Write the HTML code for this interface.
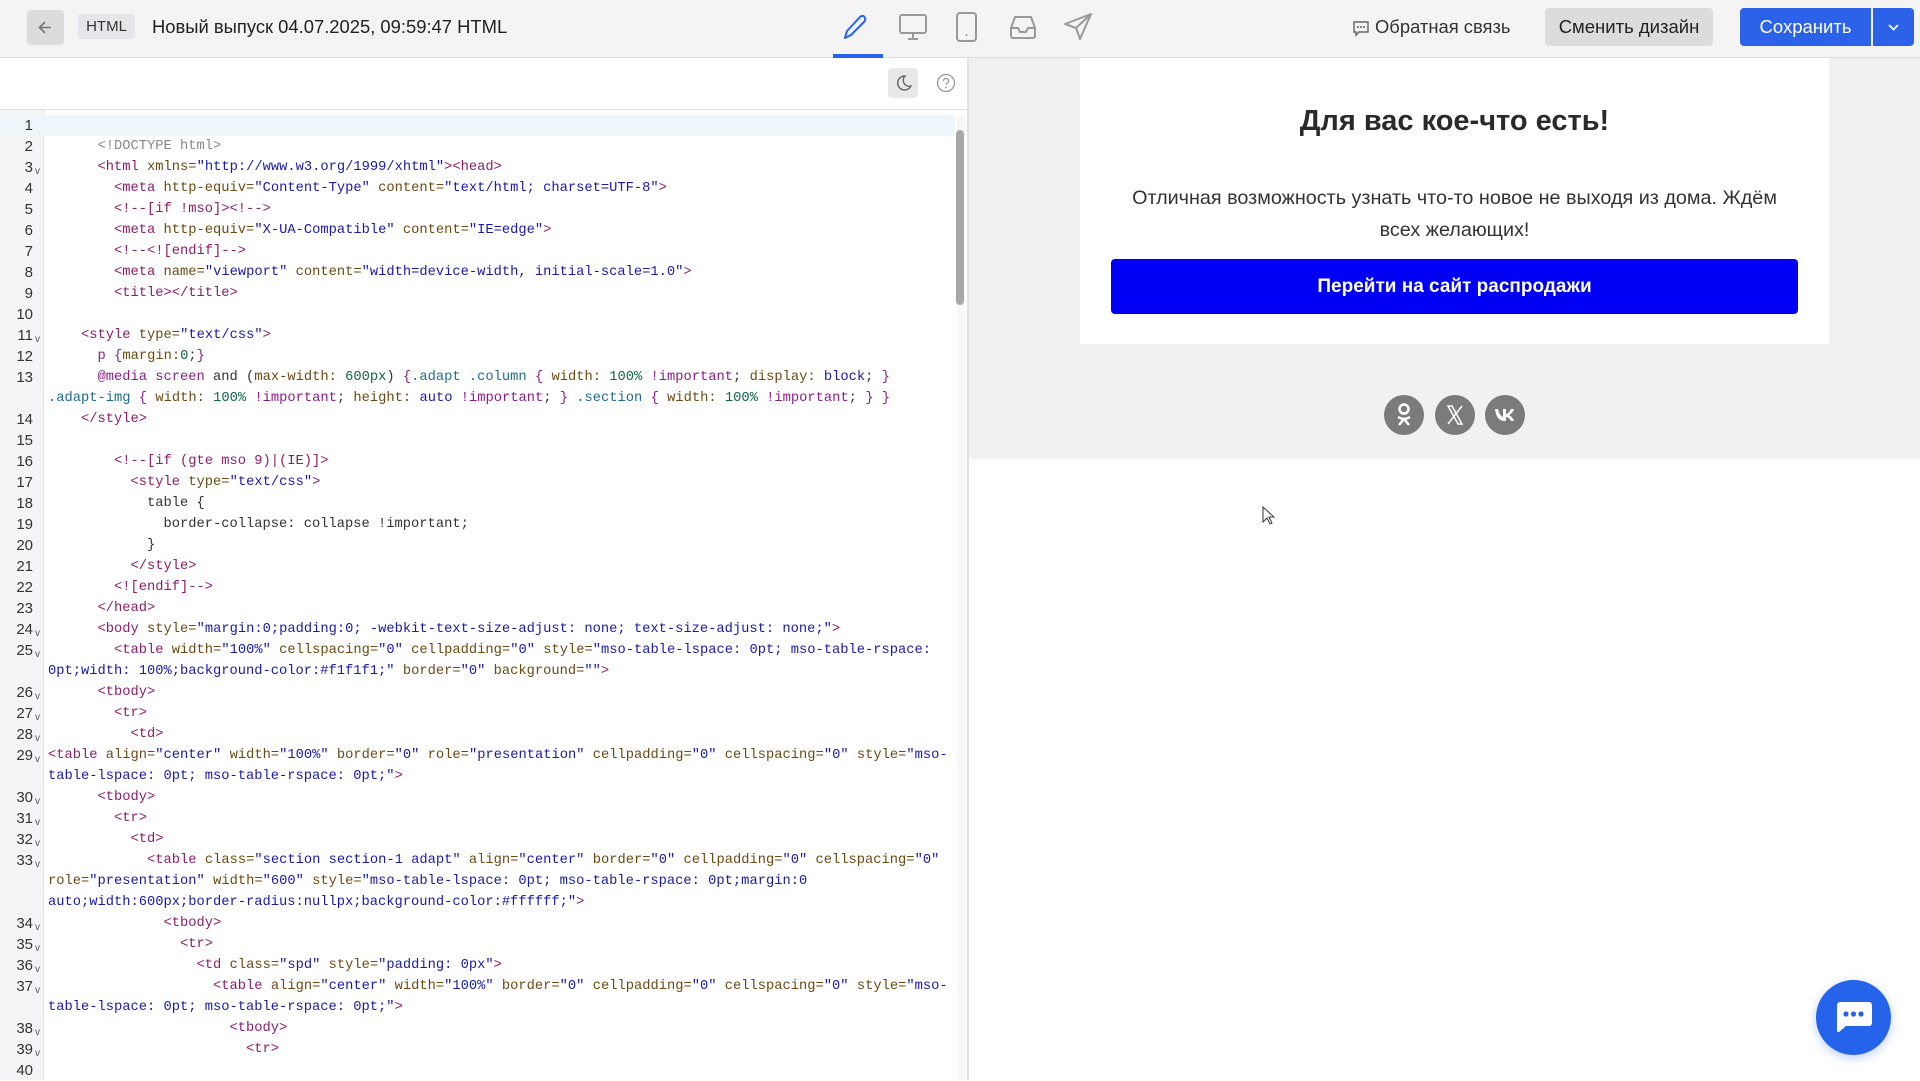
<!DOCTYPE html>
<html><head><meta charset="utf-8">
<style>
*{box-sizing:border-box;margin:0;padding:0}
body{width:1920px;height:1080px;overflow:hidden;background:#fff;font-family:"Liberation Sans",sans-serif;position:relative}
.hdr{position:absolute;left:0;top:0;width:1920px;height:58px;background:#f4f4f5;border-bottom:1px solid #dcdce2}
.abs{position:absolute}
.back{left:27px;top:10px;width:37px;height:35px;background:#dcdcdc;border-radius:4px}
.badge{left:78px;top:14px;width:57px;height:25px;background:#e6e6ea;border-radius:3px;font-size:15px;color:#333;text-align:center;line-height:25px}
.title{left:152px;top:16px;font-size:18.4px;color:#222}
.btn{border-radius:4px;font-size:18.5px;line-height:38px;text-align:center}
.tb{position:absolute;left:0;top:58px;width:967px;height:52px;background:#fff;border-bottom:1px solid #dcdce2}
.gut{position:absolute;left:0;top:110px;width:44px;height:970px;background:#f5f5f7;border-right:1px solid #e2e2e6}
.code{position:absolute;left:0;top:115px;width:955px;font-family:"Liberation Mono",monospace;font-size:13.75px;color:#333}
.r{height:21px;line-height:21px;white-space:pre;position:relative}
.n{position:absolute;left:0;width:33px;text-align:right;font-family:"Liberation Sans",sans-serif;font-size:15px;color:#333}
.f{position:absolute;left:35px;top:4px;font-size:10px;color:#555;font-family:"Liberation Sans",sans-serif}
.x{position:absolute;left:48px}
.t{color:#8b1e6b}.a{color:#6b4a12}.v{color:#1a1aa6}.g{color:#888}.s{color:#1f6a8f}.k{color:#116644}.p{color:#8b1e8b}
.right{position:absolute;left:969px;top:58px;width:951px;height:401px;background:#f1f1f1}
.card{position:absolute;left:1080px;top:58px;width:749px;height:286px;background:#fff}
</style></head><body>
<div class="hdr">
 <div class="abs back"><svg width="37" height="35" viewBox="0 0 37 35"><path d="M24 17.5H13M18 12l-5.5 5.5L18 23" stroke="#777" stroke-width="1.6" fill="none"/></svg></div>
 <div class="abs badge">HTML</div>
 <div class="abs title">Новый выпуск 04.07.2025, 09:59:47 HTML</div>
 <svg class="abs" style="left:840px;top:12px" width="30" height="30" viewBox="0 0 30 30"><path d="M5 26l2-7L20 5c1.5-1.5 3.5-1.5 4.5 0s1 3 0 4.5L11 23z" stroke="#2563eb" stroke-width="2" fill="none" stroke-linejoin="round"/></svg>
 <div class="abs" style="left:833px;top:54px;width:50px;height:4px;background:#2563eb"></div>
 <svg class="abs" style="left:898px;top:12px" width="30" height="30" viewBox="0 0 30 30"><rect x="2" y="3" width="26" height="18" rx="2" stroke="#999" stroke-width="2" fill="none"/><path d="M15 21v5M10 27h10" stroke="#999" stroke-width="2"/></svg>
 <svg class="abs" style="left:955px;top:12px" width="24" height="30" viewBox="0 0 24 30"><rect x="2" y="1" width="19" height="28" rx="3" stroke="#999" stroke-width="2" fill="none"/><circle cx="11.5" cy="23" r="1" fill="#999"/></svg>
 <svg class="abs" style="left:1008px;top:12px" width="30" height="30" viewBox="0 0 30 30"><path d="M3 16l4-11h16l4 11v8a2 2 0 0 1-2 2H5a2 2 0 0 1-2-2zM3 16h7l2 4h6l2-4h7" stroke="#999" stroke-width="2" fill="none" stroke-linejoin="round"/></svg>
 <svg class="abs" style="left:1063px;top:12px" width="30" height="30" viewBox="0 0 30 30"><path d="M28 2L2 12l11 4 4 11zM28 2L13 16" stroke="#999" stroke-width="2" fill="none" stroke-linejoin="round"/></svg>
 <svg class="abs" style="left:1352px;top:19px" width="18" height="18" viewBox="0 0 18 18"><path d="M2 3h14v10H7l-3 3v-3H2z" stroke="#666" stroke-width="1.4" fill="none"/><circle cx="6" cy="8" r="1" fill="#666"/><circle cx="9" cy="8" r="1" fill="#666"/><circle cx="12" cy="8" r="1" fill="#666"/></svg>
 <div class="abs" style="left:1375px;top:16px;font-size:18.4px;color:#333">Обратная связь</div>
 <div class="abs btn" style="left:1545px;top:8px;width:168px;background:#dcdcdc;color:#222">Сменить дизайн</div>
 <div class="abs btn" style="left:1740px;top:8px;width:131px;background:#2b62e8;color:#fff;border-radius:4px 0 0 4px">Сохранить</div>
 <div class="abs btn" style="left:1873px;top:8px;width:41px;height:38px;background:#2b62e8;border-radius:0 4px 4px 0"><svg width="41" height="38" viewBox="0 0 41 38"><path d="M16 17l4.5 4.5L25 17" stroke="#fff" stroke-width="1.8" fill="none"/></svg></div>
</div>
<div class="tb">
 <div class="abs" style="left:888px;top:10px;width:30px;height:30px;background:#e8e8e8;border-radius:4px"><svg width="30" height="30" viewBox="0 0 30 30"><path d="M17 8a7 7 0 1 0 6 10a6 6 0 0 1-6-10z" stroke="#666" stroke-width="1.4" fill="none"/></svg></div>
 <svg class="abs" style="left:936px;top:15px" width="20" height="20" viewBox="0 0 20 20"><circle cx="10" cy="10" r="8.5" stroke="#999" stroke-width="1.3" fill="none"/><path d="M7.5 8a2.5 2.5 0 1 1 3.5 2.2c-.7.4-1 .8-1 1.6" stroke="#999" stroke-width="1.3" fill="none"/><circle cx="10" cy="14.5" r=".9" fill="#999"/></svg>
</div>
<div class="abs" style="left:967px;top:58px;width:2px;height:1022px;background:#e2e2e6"></div>
<div class="gut"></div>
<div class="abs" style="left:0;top:115px;width:955px;height:21px;background:#eef6fa"></div>
<div class="abs" style="left:957px;top:115px;width:8px;height:965px;background:#f7f7f7"></div>
<div class="abs" style="left:956px;top:130px;width:8px;height:175px;background:#a8a8a8;border-radius:4px"></div>
<div class="code">
<div class="r"><span class="n">1</span></div>
<div class="r"><span class="n">2</span><span class="x g">      &lt;!DOCTYPE html&gt;</span></div>
<div class="r"><span class="n">3</span><span class="f">v</span><span class="x">      <span class="t">&lt;html</span> <span class="a">xmlns=</span><span class="v">"http://www.w3.org/1999/xhtml"</span><span class="t">&gt;&lt;head&gt;</span></span></div>
<div class="r"><span class="n">4</span><span class="x">        <span class="t">&lt;meta</span> <span class="a">http-equiv=</span><span class="v">"Content-Type"</span> <span class="a">content=</span><span class="v">"text/html; charset=UTF-8"</span><span class="t">&gt;</span></span></div>
<div class="r"><span class="n">5</span><span class="x t">        &lt;!--[if !mso]&gt;&lt;!--&gt;</span></div>
<div class="r"><span class="n">6</span><span class="x">        <span class="t">&lt;meta</span> <span class="a">http-equiv=</span><span class="v">"X-UA-Compatible"</span> <span class="a">content=</span><span class="v">"IE=edge"</span><span class="t">&gt;</span></span></div>
<div class="r"><span class="n">7</span><span class="x t">        &lt;!--&lt;![endif]--&gt;</span></div>
<div class="r"><span class="n">8</span><span class="x">        <span class="t">&lt;meta</span> <span class="a">name=</span><span class="v">"viewport"</span> <span class="a">content=</span><span class="v">"width=device-width, initial-scale=1.0"</span><span class="t">&gt;</span></span></div>
<div class="r"><span class="n">9</span><span class="x t">        &lt;title&gt;&lt;/title&gt;</span></div>
<div class="r"><span class="n">10</span></div>
<div class="r"><span class="n">11</span><span class="f">v</span><span class="x">    <span class="t">&lt;style</span> <span class="a">type=</span><span class="v">"text/css"</span><span class="t">&gt;</span></span></div>
<div class="r"><span class="n">12</span><span class="x">      <span class="p">p</span> <span class="p">{</span><span class="a">margin:</span><span class="k">0</span>;<span class="p">}</span></span></div>
<div class="r"><span class="n">13</span><span class="x">      <span class="p">@media screen</span> and (<span class="a">max-width:</span> <span class="k">600px</span>) <span class="p">{</span><span class="s">.adapt .column</span> <span class="p">{</span> <span class="a">width:</span> <span class="k">100%</span> <span class="p">!important</span>; <span class="a">display:</span> <span class="v">block</span>; <span class="p">}</span></span></div>
<div class="r"><span class="x"><span class="s">.adapt-img</span> <span class="p">{</span> <span class="a">width:</span> <span class="k">100%</span> <span class="p">!important</span>; <span class="a">height:</span> <span class="v">auto</span> <span class="p">!important</span>; <span class="p">}</span> <span class="s">.section</span> <span class="p">{</span> <span class="a">width:</span> <span class="k">100%</span> <span class="p">!important</span>; <span class="p">} }</span></span></div>
<div class="r"><span class="n">14</span><span class="x t">    &lt;/style&gt;</span></div>
<div class="r"><span class="n">15</span></div>
<div class="r"><span class="n">16</span><span class="x t">        &lt;!--[if (gte mso 9)|(IE)]&gt;</span></div>
<div class="r"><span class="n">17</span><span class="x">          <span class="t">&lt;style</span> <span class="a">type=</span><span class="v">"text/css"</span><span class="t">&gt;</span></span></div>
<div class="r"><span class="n">18</span><span class="x">            table {</span></div>
<div class="r"><span class="n">19</span><span class="x">              border-collapse: collapse !important;</span></div>
<div class="r"><span class="n">20</span><span class="x">            }</span></div>
<div class="r"><span class="n">21</span><span class="x t">          &lt;/style&gt;</span></div>
<div class="r"><span class="n">22</span><span class="x t">        &lt;![endif]--&gt;</span></div>
<div class="r"><span class="n">23</span><span class="x t">      &lt;/head&gt;</span></div>
<div class="r"><span class="n">24</span><span class="f">v</span><span class="x">      <span class="t">&lt;body</span> <span class="a">style=</span><span class="v">"margin:0;padding:0; -webkit-text-size-adjust: none; text-size-adjust: none;"</span><span class="t">&gt;</span></span></div>
<div class="r"><span class="n">25</span><span class="f">v</span><span class="x">        <span class="t">&lt;table</span> <span class="a">width=</span><span class="v">"100%"</span> <span class="a">cellspacing=</span><span class="v">"0"</span> <span class="a">cellpadding=</span><span class="v">"0"</span> <span class="a">style=</span><span class="v">"mso-table-lspace: 0pt; mso-table-rspace:</span></span></div>
<div class="r"><span class="x"><span class="v">0pt;width: 100%;background-color:#f1f1f1;"</span> <span class="a">border=</span><span class="v">"0"</span> <span class="a">background=</span><span class="v">""</span><span class="t">&gt;</span></span></div>
<div class="r"><span class="n">26</span><span class="f">v</span><span class="x t">      &lt;tbody&gt;</span></div>
<div class="r"><span class="n">27</span><span class="f">v</span><span class="x t">        &lt;tr&gt;</span></div>
<div class="r"><span class="n">28</span><span class="f">v</span><span class="x t">          &lt;td&gt;</span></div>
<div class="r"><span class="n">29</span><span class="f">v</span><span class="x"><span class="t">&lt;table</span> <span class="a">align=</span><span class="v">"center"</span> <span class="a">width=</span><span class="v">"100%"</span> <span class="a">border=</span><span class="v">"0"</span> <span class="a">role=</span><span class="v">"presentation"</span> <span class="a">cellpadding=</span><span class="v">"0"</span> <span class="a">cellspacing=</span><span class="v">"0"</span> <span class="a">style=</span><span class="v">"mso-</span></span></div>
<div class="r"><span class="x"><span class="v">table-lspace: 0pt; mso-table-rspace: 0pt;"</span><span class="t">&gt;</span></span></div>
<div class="r"><span class="n">30</span><span class="f">v</span><span class="x t">      &lt;tbody&gt;</span></div>
<div class="r"><span class="n">31</span><span class="f">v</span><span class="x t">        &lt;tr&gt;</span></div>
<div class="r"><span class="n">32</span><span class="f">v</span><span class="x t">          &lt;td&gt;</span></div>
<div class="r"><span class="n">33</span><span class="f">v</span><span class="x">            <span class="t">&lt;table</span> <span class="a">class=</span><span class="v">"section section-1 adapt"</span> <span class="a">align=</span><span class="v">"center"</span> <span class="a">border=</span><span class="v">"0"</span> <span class="a">cellpadding=</span><span class="v">"0"</span> <span class="a">cellspacing=</span><span class="v">"0"</span></span></div>
<div class="r"><span class="x"><span class="a">role=</span><span class="v">"presentation"</span> <span class="a">width=</span><span class="v">"600"</span> <span class="a">style=</span><span class="v">"mso-table-lspace: 0pt; mso-table-rspace: 0pt;margin:0</span></span></div>
<div class="r"><span class="x"><span class="v">auto;width:600px;border-radius:nullpx;background-color:#ffffff;"</span><span class="t">&gt;</span></span></div>
<div class="r"><span class="n">34</span><span class="f">v</span><span class="x t">              &lt;tbody&gt;</span></div>
<div class="r"><span class="n">35</span><span class="f">v</span><span class="x t">                &lt;tr&gt;</span></div>
<div class="r"><span class="n">36</span><span class="f">v</span><span class="x">                  <span class="t">&lt;td</span> <span class="a">class=</span><span class="v">"spd"</span> <span class="a">style=</span><span class="v">"padding: 0px"</span><span class="t">&gt;</span></span></div>
<div class="r"><span class="n">37</span><span class="f">v</span><span class="x">                    <span class="t">&lt;table</span> <span class="a">align=</span><span class="v">"center"</span> <span class="a">width=</span><span class="v">"100%"</span> <span class="a">border=</span><span class="v">"0"</span> <span class="a">cellpadding=</span><span class="v">"0"</span> <span class="a">cellspacing=</span><span class="v">"0"</span> <span class="a">style=</span><span class="v">"mso-</span></span></div>
<div class="r"><span class="x"><span class="v">table-lspace: 0pt; mso-table-rspace: 0pt;"</span><span class="t">&gt;</span></span></div>
<div class="r"><span class="n">38</span><span class="f">v</span><span class="x t">                      &lt;tbody&gt;</span></div>
<div class="r"><span class="n">39</span><span class="f">v</span><span class="x t">                        &lt;tr&gt;</span></div>
<div class="r"><span class="n">40</span></div>
</div>
<div class="right"></div>
<div class="card">
 <div class="abs" style="left:0;top:47px;width:749px;text-align:center;font-size:29px;font-weight:bold;color:#2a2a2a">Для вас кое-что есть!</div>
 <div class="abs" style="left:30px;top:124px;width:689px;text-align:center;font-size:19.8px;line-height:32px;color:#333">Отличная возможность узнать что-то новое не выходя из дома. Ждём всех желающих!</div>
 <div class="abs" style="left:31px;top:201px;width:687px;height:55px;background:#0000f5;border-radius:4px;color:#fff;font-weight:bold;font-size:19px;text-align:center;line-height:55px">Перейти на сайт распродажи</div>
</div>
<svg class="abs" style="left:1383px;top:394px" width="144" height="42" viewBox="0 0 144 42">
 <circle cx="21" cy="21" r="20" fill="#7b7b7b"/><circle cx="21" cy="15" r="4.5" stroke="#fff" stroke-width="2.5" fill="none"/><path d="M15 23c4 2.5 8 2.5 12 0M21 25l-5 6M21 25l5 6" stroke="#fff" stroke-width="2.5" fill="none"/>
 <circle cx="72" cy="21" r="20" fill="#7b7b7b"/><path d="M65 12h4l10 18h-4zM79 12l-14 18" stroke="#fff" stroke-width="1.5" fill="none"/>
 <circle cx="122" cy="21" r="20" fill="#7b7b7b"/><path d="M112 15h3c1 5 3 7 5 8v-8h3v5c2 0 4-3 5-5h3c-1 3-3 5-5 6 2 1 4 3 5 6h-3c-1-2-3-4-5-4v4h-1c-6 0-9-4-10-12z" fill="#fff"/>
</svg>
<div class="abs" style="left:1816px;top:980px;width:75px;height:75px;border-radius:50%;background:#2563eb;box-shadow:0 3px 10px rgba(37,99,235,.3)">
 <svg width="75" height="75" viewBox="0 0 75 75"><path d="M21 22h32a3 3 0 0 1 3 3v18a3 3 0 0 1-3 3H30l-7 6a1.5 1.5 0 0 1-2-1V25a3 3 0 0 1 3-3z" fill="#fff"/><circle cx="30" cy="34" r="2.6" fill="#2563eb"/><circle cx="37.5" cy="34" r="2.6" fill="#2563eb"/><circle cx="45" cy="34" r="2.6" fill="#2563eb"/></svg>
</div>
<svg class="abs" style="left:1262px;top:506px" width="14" height="20" viewBox="0 0 14 20"><path d="M1 1v15l4-4 3 6 2-1-3-6h5z" fill="#fff" stroke="#333" stroke-width="1"/></svg>
</body></html>
